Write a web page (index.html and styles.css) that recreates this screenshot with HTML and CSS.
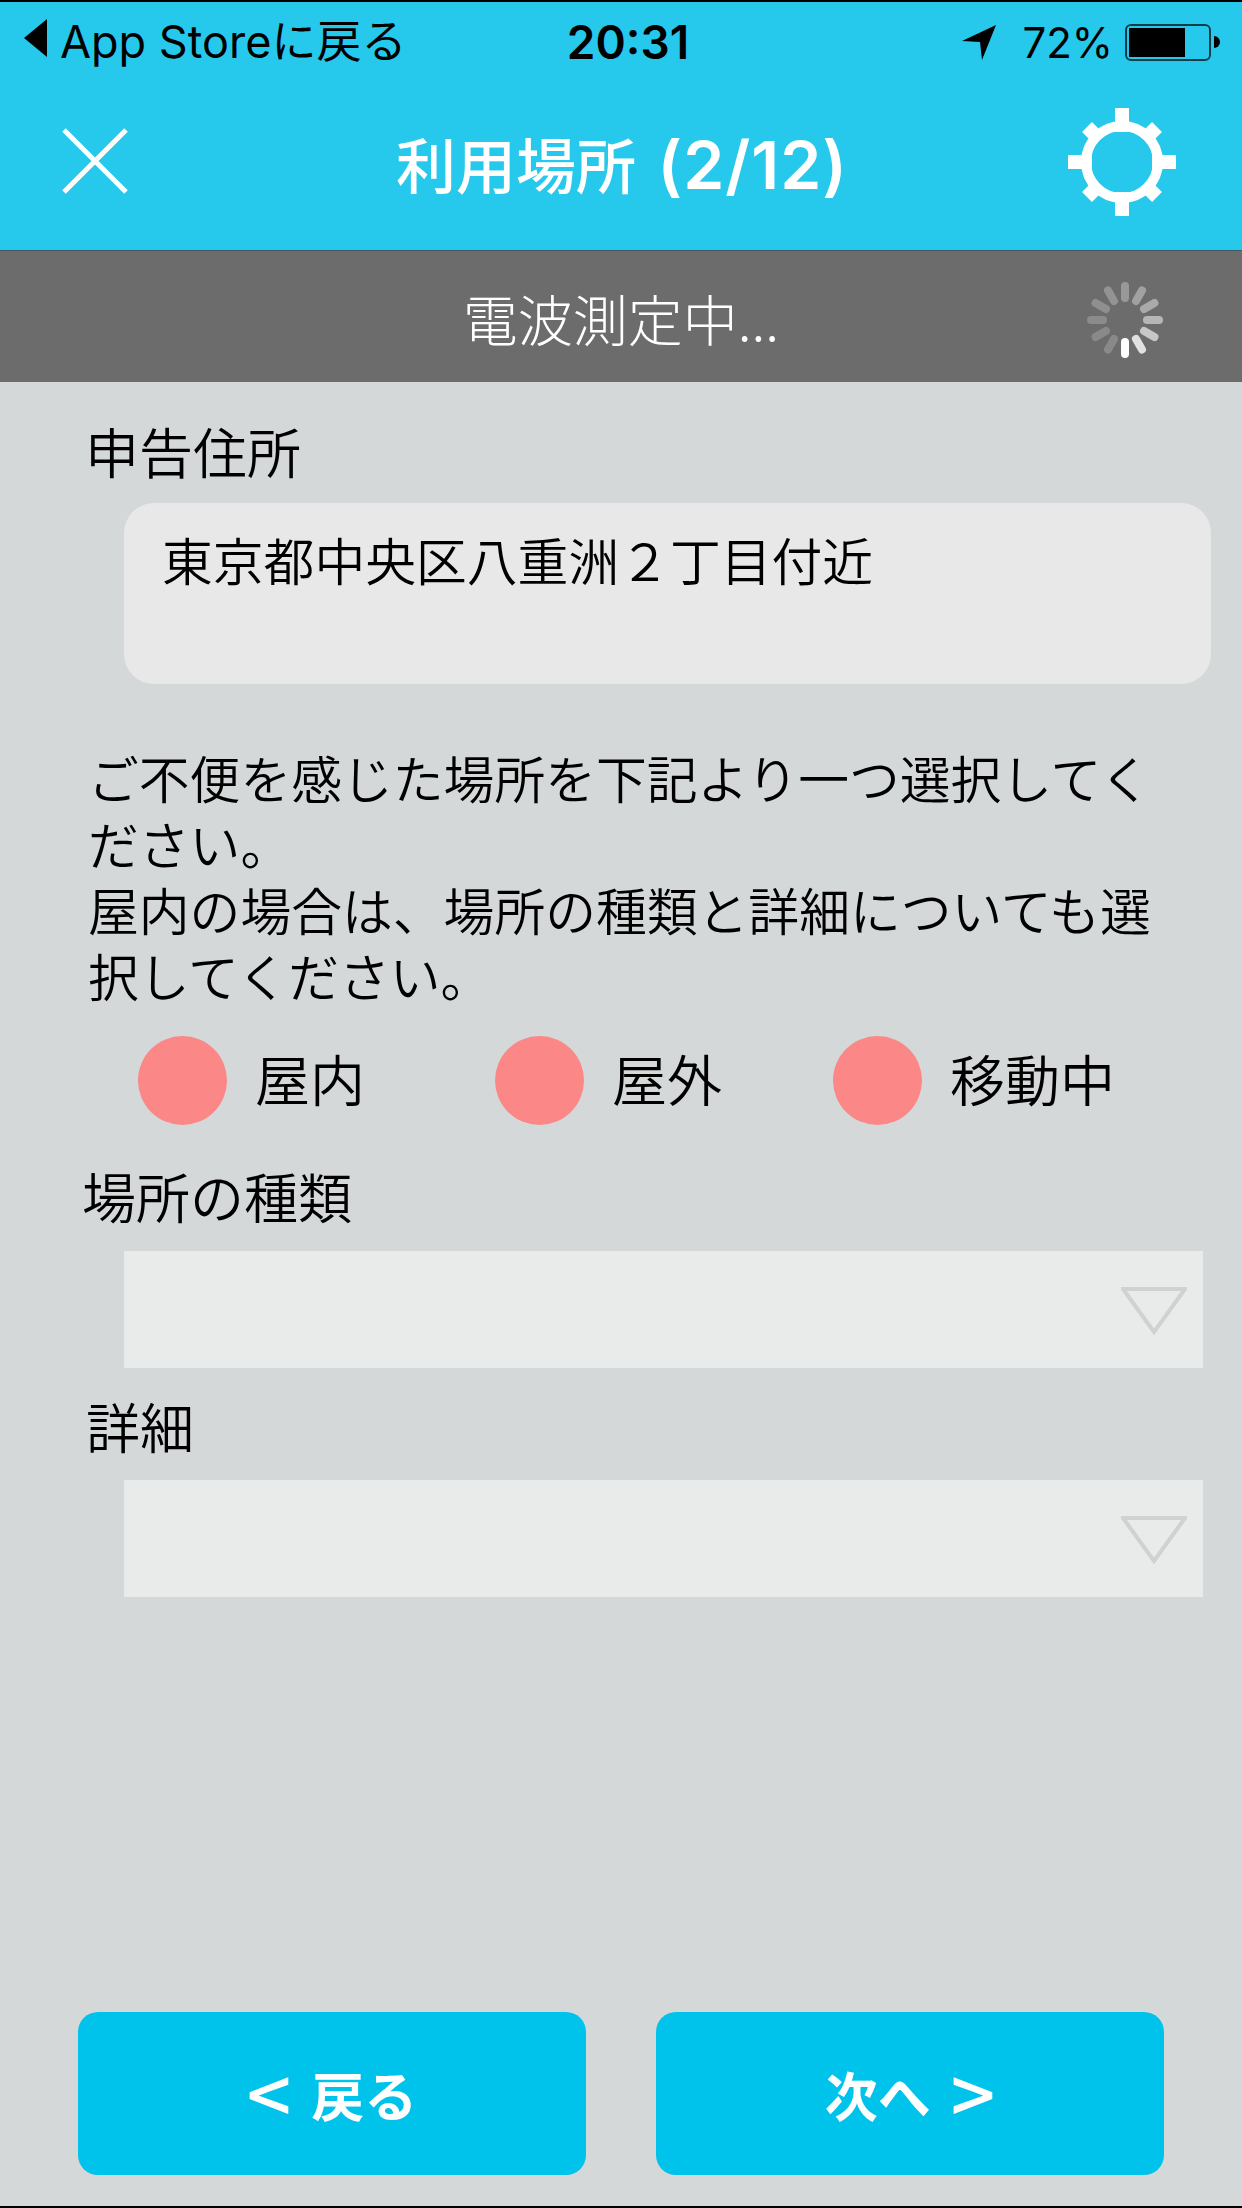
FILE: index.html
```html
<!DOCTYPE html>
<html lang="ja">
<head>
    <meta charset="UTF-8">
    <meta name="viewport" content="width=device-width, initial-scale=1.0">
    <title>利用場所</title>
    <link rel="stylesheet" href="styles.css">
</head>
<body>
    <div class="screen">
        <header class="header">
            <div class="status">
                <div class="status-left">
                    <svg class="back-arrow" width="24" height="38" viewBox="0 0 24 38"><path d="M23 0V38L0 19Z"/></svg>
                    <span>App Storeに戻る</span>
                </div>
                <div class="status-time">20:31</div>
                <div class="status-right">
                    <svg class="location" width="34" height="35" viewBox="0 0 34 35"><path d="M34 0L20 35L18 17L0 16Z"/></svg>
                    <span class="percent">72%</span>
                    <div class="battery"><div class="battery-level"></div></div>
                    <div class="battery-nub"></div>
                </div>
            </div>
            <div class="nav">
                <svg class="close" width="66" height="66" viewBox="0 0 66 66"><path d="M2 2L64 64M64 2L2 64"/></svg>
                <h1>利用場所 <span class="title-count">(2/12)</span></h1>
                <svg class="gear" width="108" height="108" viewBox="-54 -54 108 108">
                    <circle r="36" class="gear-ring"/>
                    <g class="gear-teeth">
                        <path d="M0 -54V-30"/>
                        <path d="M0 54V30"/>
                        <path d="M-54 0H-30"/>
                        <path d="M54 0H30"/>
                        <path d="M-35 -35L-26 -26"/>
                        <path d="M35 -35L26 -26"/>
                        <path d="M-35 35L-26 26"/>
                        <path d="M35 35L26 26"/>
                    </g>
                </svg>
            </div>
        </header>

        <div class="measure">
            <span class="measure-text">電波測定中...</span>
            <svg class="spinner" width="80" height="80" viewBox="-40 -40 80 80">
                <path d="M0 22V34" stroke-opacity="1"/>
                <path d="M0 22V34" stroke-opacity=".8" transform="rotate(-30)"/>
                <path d="M0 22V34" stroke-opacity=".62" transform="rotate(-60)"/>
                <path d="M0 22V34" stroke-opacity=".5" transform="rotate(-90)"/>
                <path d="M0 22V34" stroke-opacity=".42" transform="rotate(-120)"/>
                <path d="M0 22V34" stroke-opacity=".36" transform="rotate(-150)"/>
                <path d="M0 22V34" stroke-opacity=".3" transform="rotate(180)"/>
                <path d="M0 22V34" stroke-opacity=".27" transform="rotate(150)"/>
                <path d="M0 22V34" stroke-opacity=".24" transform="rotate(120)"/>
                <path d="M0 22V34" stroke-opacity=".21" transform="rotate(90)"/>
                <path d="M0 22V34" stroke-opacity=".2" transform="rotate(60)"/>
                <path d="M0 22V34" stroke-opacity=".2" transform="rotate(30)"/>
            </svg>
        </div>

        <main class="content">
            <div class="label label-address">申告住所</div>
            <div class="address">東京都中央区八重洲２丁目付近</div>

            <p class="note">ご不便を感じた場所を下記より一つ選択してく<br>ださい。<br>屋内の場合は、場所の種類と詳細についても選<br>択してください。</p>

            <div class="radios">
                <div class="radio"><span class="dot"></span><span class="radio-text">屋内</span></div>
                <div class="radio"><span class="dot"></span><span class="radio-text">屋外</span></div>
                <div class="radio"><span class="dot"></span><span class="radio-text">移動中</span></div>
            </div>

            <div class="label label-kind">場所の種類</div>
            <div class="select">
                <svg class="select-arrow" width="66" height="48" viewBox="0 0 66 48"><path d="M2 2H64L33 45Z"/></svg>
            </div>

            <div class="label label-detail">詳細</div>
            <div class="select select-detail">
                <svg class="select-arrow" width="66" height="48" viewBox="0 0 66 48"><path d="M2 2H64L33 45Z"/></svg>
            </div>
        </main>

        <footer class="footer">
            <button type="button" class="btn"><span class="btn-mark">&lt;</span><span>戻る</span></button>
            <button type="button" class="btn"><span>次へ</span><span class="btn-mark">&gt;</span></button>
        </footer>
    </div>
</body>
</html>
```

FILE: styles.css
```css
* {
    box-sizing: border-box;
}
body {
    margin: 0;
    padding: 0;
    background-color: #d4d8d9;
    color: #000;
    font-family: "Noto Sans CJK JP", sans-serif;
    font-weight: 350;
}
.screen {
    width: 1242px;
    height: 2208px;
    display: flex;
    flex-direction: column;
    border-top: 2px solid #000;
    border-bottom: 2px solid #000;
    overflow: hidden;
}

/* header */
.header {
    height: 249px;
    background-color: #26c9ec;
    border-bottom: 1px solid #3f5a60;
    flex-shrink: 0;
}
.status {
    height: 80px;
    display: grid;
    grid-template-columns: 1fr auto 1fr;
    align-items: center;
    padding: 0 22px 0 24px;
    font-family: Inter, "Noto Sans CJK JP", sans-serif;
    font-weight: 400;
    font-size: 42px;
    color: #000;
}
.status-left {
    display: flex;
    align-items: center;
    gap: 12px;
    padding-bottom: 8px;
    font-size: 45px;
    white-space: nowrap;
}
.back-arrow {
    fill: #000;
}
.status-time {
    font-weight: 600;
    font-size: 46px;
    padding-left: 12px;
}
.status-right {
    display: flex;
    align-items: center;
    justify-content: flex-end;
}
.location {
    fill: #000;
    margin-right: 26px;
}
.percent {
    margin-right: 12px;
}
.battery {
    width: 86px;
    height: 37px;
    border: 2px solid #0c3f4c;
    border-radius: 6px;
    padding: 2px;
}
.battery-level {
    width: 56px;
    height: 100%;
    background-color: #000;
}
.battery-nub {
    width: 6px;
    height: 12px;
    margin-left: 3px;
    background-color: #000;
    border-radius: 0 6px 6px 0;
}
.nav {
    height: 167px;
    display: grid;
    grid-template-columns: 1fr auto 1fr;
    align-items: center;
    padding: 0 66px 6px 62px;
}
.close {
    fill: none;
    stroke: #fff;
    stroke-width: 5;
    margin-top: -4px;
}
.nav h1 {
    margin: 0;
    padding-left: 6px;
    color: #fff;
    font-size: 60px;
    font-weight: 500;
    white-space: nowrap;
    font-family: "Noto Sans CJK JP", sans-serif;
}
.title-count {
    margin-left: 8px;
    font-family: Inter, sans-serif;
    font-size: 66px;
    font-weight: 600;
    letter-spacing: 1px;
}
.gear {
    justify-self: end;
    margin-top: -2px;
}
.gear-ring {
    fill: none;
    stroke: #fff;
    stroke-width: 10;
}
.gear-teeth path {
    stroke: #fff;
    stroke-width: 14;
}

/* measuring bar */
.measure {
    height: 131px;
    flex-shrink: 0;
    background-color: #6b6c6b;
    display: flex;
    align-items: center;
    justify-content: center;
    position: relative;
    color: #fff;
    font-size: 55px;
    font-weight: 300;
}
.spinner {
    position: absolute;
    right: 77px;
    top: 29px;
    fill: none;
    stroke: #fff;
    stroke-width: 8;
    stroke-linecap: round;
}

/* form */
.content {
    flex: 1;
    padding: 40px 0 0 0;
    font-size: 50.8px;
}
.label {
    line-height: 58px;
    padding-bottom: 8px;
    font-size: 54px;
}
.label-address {
    padding-left: 85px;
}
.address {
    margin: 15px 31px 0 124px;
    height: 181px;
    padding: 23px 38px 0;
    line-height: 66px;
    background-color: #e8e8e8;
    border-radius: 30px;
}
.note {
    margin: 60px 0 0 88px;
    line-height: 66px;
    white-space: nowrap;
}
.radios {
    display: grid;
    grid-template-columns: 357px 338px auto;
    margin: 28px 0 0 138px;
    font-size: 55px;
}
.radio {
    display: flex;
    align-items: center;
    gap: 28px;
}
.radio-text {
    padding-bottom: 8px;
}
.dot {
    width: 89px;
    height: 89px;
    border-radius: 50%;
    background-color: #fb8787;
}
.label-kind {
    margin-top: 42px;
    padding-left: 82px;
}
.label-detail {
    margin-top: 29px;
    padding-left: 86px;
}
.select {
    margin: 18px 39px 0 124px;
    height: 117px;
    background-color: #e9ebea;
    display: flex;
    align-items: center;
    justify-content: flex-end;
    padding-right: 16px;
    padding-top: 2px;
}
.select-detail {
    margin-top: 17px;
}
.select-arrow {
    fill: none;
    stroke: #d0d2d2;
    stroke-width: 4;
}

/* bottom buttons */
.footer {
    display: flex;
    gap: 70px;
    padding: 0 78px 31px;
    flex-shrink: 0;
}
.btn {
    width: 508px;
    height: 163px;
    border: none;
    border-radius: 20px;
    background-color: #00c3ec;
    color: #fff;
    font-family: "Noto Sans CJK JP", sans-serif;
    font-size: 53px;
    font-weight: 700;
    display: flex;
    align-items: center;
    justify-content: center;
    gap: 20px;
}
.btn-mark {
    font-size: 78px;
    font-weight: 500;
    line-height: 1;
    padding-bottom: 6px;
}
```
